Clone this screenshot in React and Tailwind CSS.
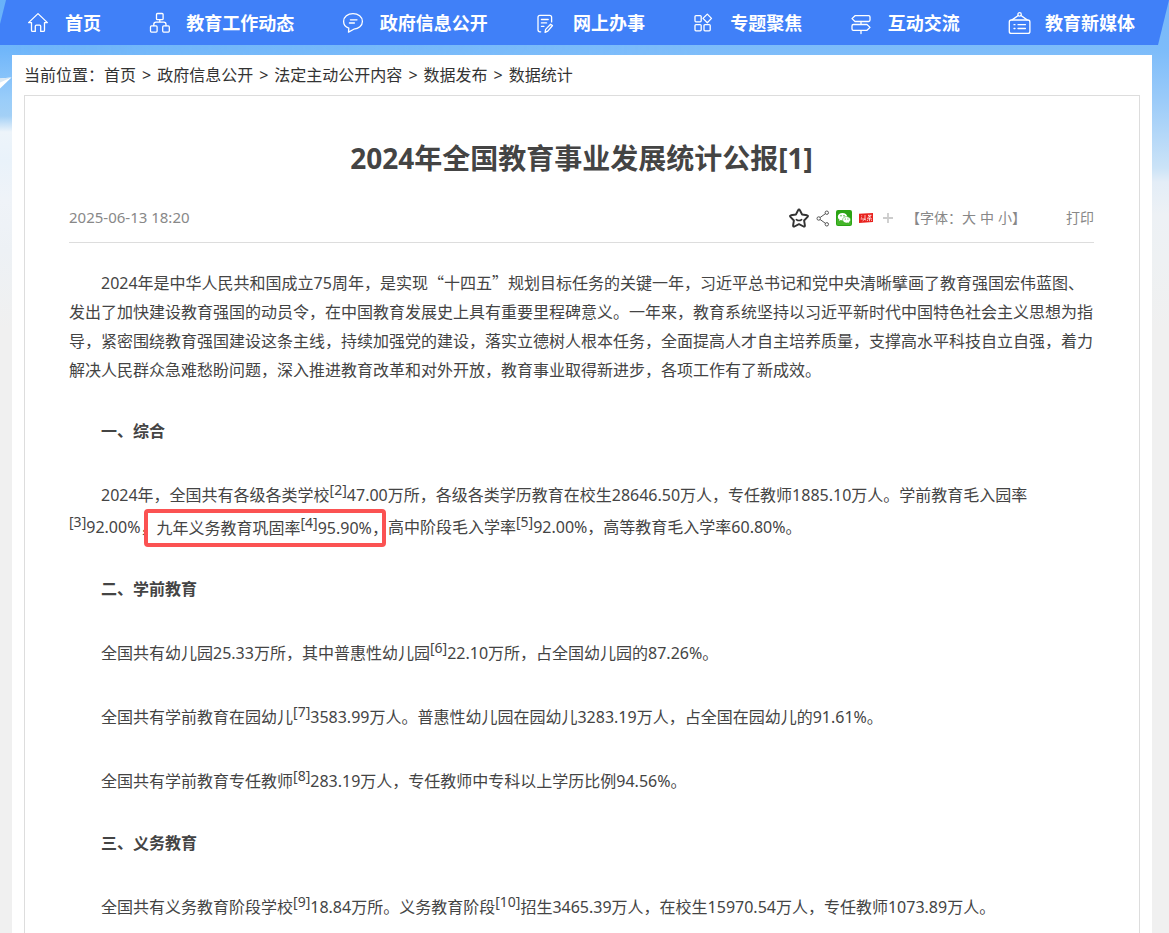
import React from "react";

const iconProps = {
  width: 24,
  height: 24,
  viewBox: "0 0 24 24",
  fill: "none",
  stroke: "currentColor",
  strokeWidth: 1.3,
  strokeLinejoin: "round",
  strokeLinecap: "round",
  "aria-hidden": true,
  className: "shrink-0 overflow-visible",
};

const HomeIcon = () => (
  <svg {...iconProps}>
    <path d="M12 2.6 2.6 11.6h2.9v7.6q0 1.2 1.2 1.2h2.6v-5.2q0-1 1-1h3.4q1 0 1 1v5.2h2.6q1.2 0 1.2-1.2v-7.6h2.9z" />
  </svg>
);

const OrgIcon = () => (
  <svg {...iconProps}>
    <g transform="translate(0.8 -0.7)">
      <rect x="8.7" y="3.2" width="6.6" height="6.2" rx="1" />
      <rect x="2.7" y="15.6" width="6.6" height="6.2" rx="1" />
      <rect x="14.9" y="15.6" width="6.6" height="6.2" rx="1" />
      <path d="M12 9.4v2.4M6 15.4v-1.3q0-2.2 2.2-2.2h7.8q2.2 0 2.2 2.2v1.3" />
    </g>
  </svg>
);

const SpeechIcon = () => (
  <svg {...iconProps}>
    <path d="M12 2.6c5.2 0 9.4 3.4 9.4 7.8 0 4.2-3.8 7.4-8.6 7.8l-5.3 2.9.3-3.9C4.6 15.9 2.6 13.4 2.6 10.4 2.6 6 6.8 2.6 12 2.6z" />
    <path d="M9.4 8.8h6.600M8.400 12h5" />
  </svg>
);

const NoteIcon = () => (
  <svg {...iconProps}>
    <g transform="translate(-0.8 -0.5)">
      <path d="M7.5 21.300H6.800q-2 0-2-2V6.800q0-2 2-2h9.600q2 0 2 2v4.600" />
      <path d="M8.200 9h6.800M8.200 12.400h5.200M8.200 15.800h2.600" />
      <path d="m17.400 13.700 1.900 1.300-4.700 5.600-2.700 1.300.5-3z" />
    </g>
  </svg>
);

const GridIcon = () => (
  <svg {...iconProps}>
    <g transform="translate(0 -0.6)">
      <rect x="4" y="5.200" width="6.200" height="6.200" rx="1" />
      <rect x="4" y="14.200" width="6.200" height="6.200" rx="1" />
      <rect x="13" y="14.200" width="6.200" height="6.200" rx="1" />
      <path d="m16.300 3.700 4.200 4.300-4.200 4.300L12 8z" />
    </g>
  </svg>
);

const SignIcon = () => (
  <svg {...iconProps}>
    <path d="M6 4.700h13.600q1.400 0 1.400 1.400v3q0 1.400-1.400 1.400H6L3 7.600z" />
    <path d="M18 13.500H4.400Q3 13.500 3 14.900v3q0 1.400 1.400 1.400H18l3-2.900zM12 10.500v3M12 19.300v3.200" />
  </svg>
);

const BoardIcon = () => (
  <svg {...iconProps}>
    <g transform="translate(1.6 0)">
      <rect x="1.700" y="9" width="20.600" height="13.400" rx="2" />
      <circle cx="12" cy="3.400" r="1.700" />
      <path d="M10.600 4.500 4.500 8.900M13.400 4.500l6.100 4.400M6.400 13.700h1M10.400 13.700h7.400M6.400 17.500h1M10.400 17.500h7.400" />
    </g>
  </svg>
);

const NAV = [
  ["首页", HomeIcon],
  ["教育工作动态", OrgIcon],
  ["政府信息公开", SpeechIcon],
  ["网上办事", NoteIcon],
  ["专题聚焦", GridIcon],
  ["互动交流", SignIcon],
  ["教育新媒体", BoardIcon],
];

const CRUMBS = ["首页", "政府信息公开", "法定主动公开内容", "数据发布", "数据统计"];

function Sky() {
  return (
    <div aria-hidden="true" className="absolute inset-x-0 top-0 -z-10 h-[340px] bg-[linear-gradient(to_bottom,#68b2f9_0px,#70b6fa_50px,#9acdf9_100px,#a3d0f6_116px,#edf4fa_132px,#e9f2fa_160px,#eff3f8_200px,#edf1f5_250px,#f0f0f0_330px)]">
      <div className="h-full bg-[linear-gradient(to_bottom,#74b7fa_0px,#7dbcfa_50px,#9bcbf9_100px,#cbe3f7_168px,#e3edf7_182px,#edf1f5_215px,#eef1f3_260px,#f0f0f0_330px)] [mask-image:linear-gradient(to_right,transparent_12px,black_60%)]" />
      <svg width="12" height="16" viewBox="0 0 12 16" className="absolute left-0 top-[76px]">
        <path d="M0 2.500 11.500 1.500 0 12.500z" fill="#fff" />
        <path d="M0 2.500 11.500 1.500 0 6.500z" fill="#d8e8f5" />
      </svg>
    </div>
  );
}

function StarIcon() {
  return (
    <svg width="22" height="22" viewBox="0 0 22 22" fill="none" stroke="#333" strokeWidth="1.900" strokeLinejoin="round" strokeLinecap="round">
      <path d="M11 1.800q.6 0 .9.700l2.200 4.300 5 .8q1.500.4.500 1.600l-3.500 3.600.8 5q.1 1.500-1.300 1L11 16.500l-4.600 2.300q-1.400.5-1.300-1l.8-5L2.400 9.200q-1-1.200.5-1.600l5-.8 2.200-4.300q.3-.7.9-.7z" transform="translate(0 .7)" />
      <path d="M8.300 12.600q2.700 2 5.400 0" strokeWidth="1.500" />
    </svg>
  );
}

function ShareIcon() {
  return (
    <svg width="14" height="18" viewBox="0 0 14 18" fill="none" stroke="#555" strokeWidth="1">
      <circle cx="2.700" cy="9.500" r="1.700" />
      <circle cx="10.800" cy="3.700" r="1.700" />
      <circle cx="10.800" cy="15.300" r="1.700" />
      <path d="m4.100 8.500 5.300-3.800M4.100 10.500l5.300 3.800" />
    </svg>
  );
}

function WechatIcon() {
  return (
    <svg width="16" height="16" viewBox="0 0 16 16">
      <rect width="16" height="16" rx="2" fill="#2ba414" />
      <rect x="1" y="8" width="14" height="7" rx="1" fill="#45b52a" />
      <path d="M6.500 3C3.900 3 1.800 4.600 1.800 6.700c0 1.200.7 2.200 1.700 2.900L3 11l1.800-.9q.8.300 1.700.3c2.600 0 4.700-1.600 4.700-3.700S9.100 3 6.500 3z" fill="#fff" />
      <path d="M10.500 6.600c-2.200 0-3.900 1.400-3.900 3.200s1.700 3.200 3.900 3.200q.7 0 1.300-.2l1.600.8-.4-1.300c.9-.6 1.500-1.500 1.500-2.500 0-1.800-1.800-3.200-4-3.200z" fill="#fff" stroke="#2ba414" strokeWidth=".5" />
      <g fill="#2ba414">
        <circle cx="5" cy="5.700" r=".7" />
        <circle cx="8" cy="5.700" r=".7" />
        <circle cx="9.300" cy="9" r=".6" />
        <circle cx="11.900" cy="9" r=".6" />
      </g>
    </svg>
  );
}

function ToutiaoIcon() {
  return (
    <svg width="16" height="16" viewBox="0 0 16 16">
      <path d="M1 3.700 15 3v9l-14 .9z" fill="#e8211d" />
      <path d="M3.200 5.800h1M3 7.800h1M7 5v3.500M2.600 9h5.200M6.800 9l-2.200 2M6.800 9l1 1.500M10 5.300h3.600M10 5.300l3 2.200M13 5.500 9.400 8M9 8.800h5M11.500 7.500v3.700M10 10l-1 1M13 10l1 .8" stroke="#fff" strokeWidth=".7" fill="none" />
    </svg>
  );
}

function PlusIcon() {
  return (
    <svg width="12" height="12" viewBox="0 0 12 12" stroke="#ccc" strokeWidth="1.800">
      <path d="M6 1v10M1 6h10" />
    </svg>
  );
}

const Ref = ({ n }) => (
  <sup className="static align-super text-sm leading-[23px]">[{n}]</sup>
);

const Quoted = ({ children }) => (
  <span className="font-['Noto_Sans_CJK_SC',sans-serif]">“{children}”</span>
);

const H = ({ children }) => <h2 className="indent-8 font-bold">{children}</h2>;

const P = ({ children }) => <p className="indent-8">{children}</p>;

export default function App() {
  return (
    <div className="relative isolate flex min-h-screen flex-col bg-[#f0f0f0] font-['Noto_Sans','Noto_Sans_CJK_SC',sans-serif] text-[#444]">
      <Sky />
      <nav className="bg-[#4080f8] text-white [clip-path:polygon(6px_0,100%_0,calc(100%-11px)_100%,0_100%,0_24px)]">
        <ul className="flex h-[45px] items-center justify-between pl-[26px] pr-[34px]">
          {NAV.map(([label, Icon]) => (
            <li key={label}>
              <a href="#" className="flex items-center gap-[15px] whitespace-nowrap text-lg font-bold leading-6">
                <Icon />
                {label}
              </a>
            </li>
          ))}
        </ul>
      </nav>

      <main className="ml-3 mr-[17px] mt-[10px] flex flex-1 flex-col bg-white px-3">
        <div className="flex h-10 items-center text-base text-[#333]">
          <span>当前位置：</span>
          {CRUMBS.map((c, i) => (
            <React.Fragment key={c}>
              {i > 0 && <span className="px-[6px]">&gt;</span>}
              <a href="#">{c}</a>
            </React.Fragment>
          ))}
        </div>

        <article className="flex-1 border border-b-0 border-[#ddd] pl-[44px] pr-[45px] pt-[42px]">
          <h1 className="text-center text-[28px] font-bold leading-10">2024年全国教育事业发展统计公报[1]</h1>

          <div className="mt-4 flex h-[49px] items-center justify-between border-b border-[#ddd] text-sm text-[#888]">
            <time className="text-[15px]">2025-06-13 18:20</time>
            <div className="flex items-center">
              <div className="mr-3 flex items-center gap-[6px]">
                <button type="button" aria-label="收藏"><StarIcon /></button>
                <button type="button" aria-label="分享"><ShareIcon /></button>
                <button type="button" aria-label="微信"><WechatIcon /></button>
                <button type="button" aria-label="头条"><ToutiaoIcon /></button>
                <button type="button" aria-label="更多" className="pl-[2px]"><PlusIcon /></button>
              </div>
              <div className="flex items-center">
                <span>【字体：</span>
                <span className="flex gap-1">
                  <button type="button">大</button>
                  <button type="button">中</button>
                  <button type="button">小</button>
                </span>
                <span>】</span>
              </div>
              <button type="button" className="ml-10">打印</button>
            </div>
          </div>

          <div className="flex flex-col gap-8 pt-[25px] text-base leading-[29px]">
            <P>
              2024年是中华人民共和国成立75周年，是实现<Quoted>十四五</Quoted>规划目标任务的关键一年，习近平总书记和党中央清晰擘画了教育强国宏伟蓝图、发出了加快建设教育强国的动员令，在中国教育发展史上具有重要里程碑意义。一年来，教育系统坚持以习近平新时代中国特色社会主义思想为指导，紧密围绕教育强国建设这条主线，持续加强党的建设，落实立德树人根本任务，全面提高人才自主培养质量，支撑高水平科技自立自强，着力解决人民群众急难愁盼问题，深入推进教育改革和对外开放，教育事业取得新进步，各项工作有了新成效。
            </P>
            <H>一、综合</H>
            <P>
              2024年，全国共有各级各类学校<Ref n="2" />47.00万所，各级各类学历教育在校生28646.50万人，专任教师1885.10万人。学前教育毛入园率<Ref n="3" />92.00%，
              <span className="relative">
                九年义务教育巩固率<Ref n="4" />95.90%，
                <span aria-hidden="true" className="absolute -left-3 -top-2 bottom-[-8px] right-[2px] rounded-sm border-4 border-[#fb5252]" />
              </span>
              高中阶段毛入学率<Ref n="5" />92.00%，高等教育毛入学率60.80%。
            </P>
            <H>二、学前教育</H>
            <P>全国共有幼儿园25.33万所，其中普惠性幼儿园<Ref n="6" />22.10万所，占全国幼儿园的87.26%。</P>
            <P>全国共有学前教育在园幼儿<Ref n="7" />3583.99万人。普惠性幼儿园在园幼儿3283.19万人，占全国在园幼儿的91.61%。</P>
            <P>全国共有学前教育专任教师<Ref n="8" />283.19万人，专任教师中专科以上学历比例94.56%。</P>
            <H>三、义务教育</H>
            <P>全国共有义务教育阶段学校<Ref n="9" />18.84万所。义务教育阶段<Ref n="10" />招生3465.39万人，在校生15970.54万人，专任教师1073.89万人。</P>
          </div>
        </article>
      </main>
    </div>
  );
}
